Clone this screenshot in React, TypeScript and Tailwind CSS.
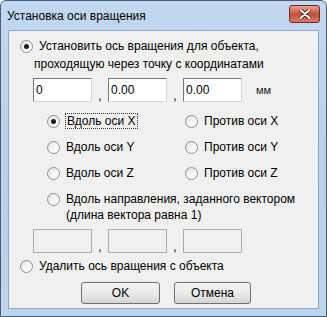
import React from "react";

const font = { fontFamily: '"Liberation Sans", Arial, sans-serif' };

function Radio({ checked = false }: { checked?: boolean }) {
  return (
    <span className="relative inline-block w-[13px] h-[13px] shrink-0 rounded-full border border-[#8e8f8f] bg-gradient-to-br from-[#dcdcdc] via-[#f6f6f6] to-white">
      {checked && (
        <span className="absolute left-[3px] top-[3px] w-[5px] h-[5px] rounded-full bg-[#1a1a1a]" />
      )}
    </span>
  );
}

function Field({ value, disabled = false }: { value?: string; disabled?: boolean }) {
  return (
    <div
      className={
        "w-[59px] h-[24px] border flex items-center px-[2px] text-[12px] text-black " +
        (disabled
          ? "border-[#acacac] bg-[#f0f0f0]"
          : "border-t-[#7a7a7a] border-l-[#7a7a7a] border-r-[#d5d5d5] border-b-[#d5d5d5] bg-white")
      }
    >
      {value}
    </div>
  );
}

function Comma() {
  return <span className="w-[16px] text-center text-[12px] text-black self-end leading-[12px]">,</span>;
}

function FieldRow({ values, disabled }: { values: string[]; disabled?: boolean }) {
  return (
    <div className="flex items-stretch">
      <Field value={values[0]} disabled={disabled} />
      <Comma />
      <Field value={values[1]} disabled={disabled} />
      <Comma />
      <Field value={values[2]} disabled={disabled} />
    </div>
  );
}

export default function App() {
  return (
    <div
      className="w-[327px] h-[317px] flex flex-col border border-[#4c5d72] rounded-t-[6px] bg-gradient-to-b from-[#c2d8f1] via-[#b9d1ec] to-[#bcd5ef] text-[12px] text-black"
      style={font}
    >
      {/* Title bar */}
      <div className="h-[29px] flex items-center justify-between pl-[6px] pr-[6px]">
        <span className="text-[12px] text-black">Установка оси вращения</span>
        <div className="w-[31px] h-[18px] -mt-[3px] rounded-[3px] border border-[#6d2b23] bg-gradient-to-b from-[#e6a494] via-[#c74e39] to-[#d27962] flex items-center justify-center">
          <svg width="12" height="10" viewBox="0 0 12 10">
            <path d="M1.5 1 L10.5 9 M10.5 1 L1.5 9" stroke="#3a1a14" strokeWidth="3.6" strokeLinecap="round" />
            <path d="M1.5 1 L10.5 9 M10.5 1 L1.5 9" stroke="#ffffff" strokeWidth="2" strokeLinecap="round" />
          </svg>
        </div>
      </div>
      {/* Client area */}
      <div className="flex-1 mx-[7px] mb-[7px] border border-[#8fa8c6] bg-[#f0f0f0]">
        <div className="pl-[11px] pt-[7px] flex flex-col">
          <div className="flex items-center gap-[6px] h-[16px]">
            <Radio checked />
            <span>Установить ось вращения для объекта,</span>
          </div>
          <div className="pl-[14px] h-[16px] mt-[2px] flex items-center">
            проходящую через точку с координатами
          </div>
          <div className="pl-[13px] mt-[6px] flex items-center">
            <FieldRow values={["0", "0.00", "0.00"]} />
            <span className="ml-[14px] text-[11px] text-[#222]">мм</span>
          </div>
          <div className="pl-[27px] mt-[11px] grid grid-cols-[138px_1fr] gap-y-[10px]">
            <div className="flex items-center gap-[6px] h-[16px]">
              <Radio checked />
              <span className="outline outline-1 outline-dotted outline-[#333] px-[1px] leading-[14px]">Вдоль оси X</span>
            </div>
            <div className="flex items-center gap-[6px] h-[16px]">
              <Radio />
              <span>Против оси X</span>
            </div>
            <div className="flex items-center gap-[6px] h-[16px]">
              <Radio />
              <span>Вдоль оси Y</span>
            </div>
            <div className="flex items-center gap-[6px] h-[16px]">
              <Radio />
              <span>Против оси Y</span>
            </div>
            <div className="flex items-center gap-[6px] h-[16px]">
              <Radio />
              <span>Вдоль оси Z</span>
            </div>
            <div className="flex items-center gap-[6px] h-[16px]">
              <Radio />
              <span>Против оси Z</span>
            </div>
          </div>
          <div className="pl-[27px] mt-[10px] flex items-center gap-[6px] h-[16px]">
            <Radio />
            <span>Вдоль направления, заданного вектором</span>
          </div>
          <div className="pl-[46px] h-[16px] flex items-center">(длина вектора равна 1)</div>
          <div className="pl-[13px] mt-[6px]">
            <FieldRow values={["", "", ""]} disabled />
          </div>
          <div className="mt-[5px] flex items-center gap-[6px] h-[16px]">
            <Radio />
            <span>Удалить ось вращения с объекта</span>
          </div>
          <div className="mt-[8px] pl-[61px] flex gap-[14px]">
            <button className="w-[79px] h-[22px] rounded-[3px] border border-[#707070] bg-gradient-to-b from-[#f2f2f2] via-[#ebebeb] to-[#d5d5d5] text-[12px]">
              OK
            </button>
            <button className="w-[77px] h-[22px] rounded-[3px] border border-[#707070] bg-gradient-to-b from-[#f2f2f2] via-[#ebebeb] to-[#d5d5d5] text-[12px]">
              Отмена
            </button>
          </div>
        </div>
      </div>
    </div>
  );
}
